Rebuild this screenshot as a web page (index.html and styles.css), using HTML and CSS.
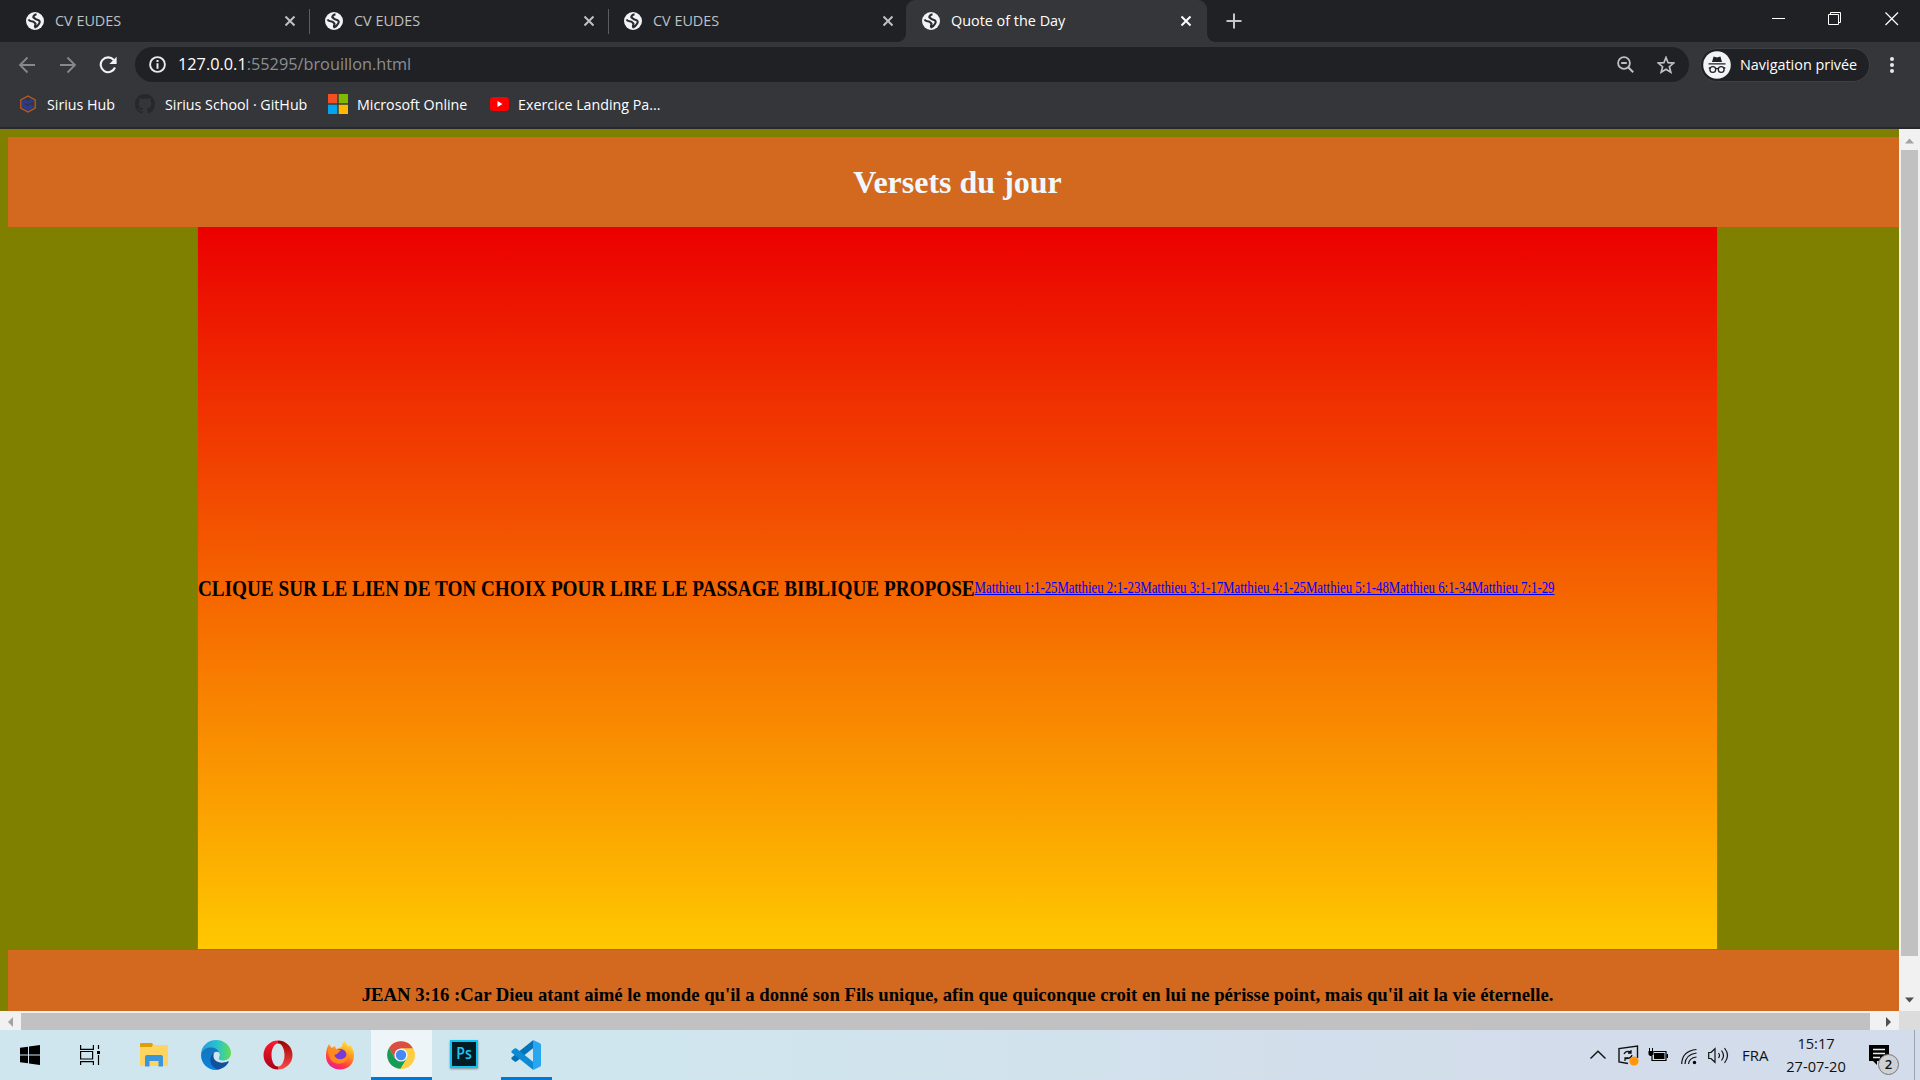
FILE: index.html
```html
<!DOCTYPE html>
<html lang="fr">
<head>
<meta charset="utf-8">
<title>Quote of the Day</title>
<link rel="stylesheet" href="styles.css">
</head>
<body>
<svg class="defs" width="0" height="0">
  <symbol id="globe" viewBox="0 0 18 18"><circle cx="9" cy="9" r="9" fill="#f1f3f4"/><path d="M10.500 2.300Q7.500 3 7.300 5.200 9.500 7.500 12.500 8.200 14.500 9.300 13.200 11.500 11.500 14.500 9.300 15.300 8.600 13.600 9.600 12 8.300 9.400 5.500 9.300 3.500 9 2.500 7.500" fill="none" stroke="#292a2d" stroke-width="2.100" stroke-linejoin="round"/></symbol>
  <symbol id="close" viewBox="0 0 12 12"><path d="M1.500 1.500l9 9m0-9l-9 9" fill="none" stroke="currentColor" stroke-width="2"/></symbol>
</svg>
<div class="screen">
  <div class="tabstrip">
    <div class="tab"><svg class="favicon"><use href="#globe"/></svg><span class="title">CV EUDES</span><svg class="close"><use href="#close"/></svg></div>
    <div class="tab"><svg class="favicon"><use href="#globe"/></svg><span class="title">CV EUDES</span><svg class="close"><use href="#close"/></svg></div>
    <div class="tab last"><svg class="favicon"><use href="#globe"/></svg><span class="title">CV EUDES</span><svg class="close"><use href="#close"/></svg></div>
    <div class="tab active"><svg class="favicon"><use href="#globe"/></svg><span class="title">Quote of the Day</span><svg class="close"><use href="#close"/></svg></div>
    <svg class="plus" width="16" height="16" viewBox="0 0 16 16"><path d="M8 .5v15M.5 8h15" stroke="#c4c7ca" stroke-width="2"/></svg>
    <div class="window-buttons">
      <svg width="14" height="14" viewBox="0 0 14 14"><path d="M0 6.500h13" stroke="#fff"/></svg>
      <svg width="14" height="14" viewBox="0 0 14 14"><path d="M.5 2.500h10v10H.5zM2.500 2.500V.5h10v10h-2" fill="none" stroke="#fff"/></svg>
      <svg width="14" height="14" viewBox="0 0 14 14"><path d="M.5.5l12.500 12.500M13 .5L.5 13" stroke="#fff" stroke-width="1.200"/></svg>
    </div>
  </div>

  <div class="toolbar">
    <svg class="nav" width="18" height="18" viewBox="0 0 18 18"><path d="M17 9H2m7.500-7.500L2 9l7.500 7.500" fill="none" stroke="#86888b" stroke-width="1.800"/></svg>
    <svg class="nav" width="18" height="18" viewBox="0 0 18 18"><path d="M1 9h15M8.500 1.500L16 9l-7.500 7.500" fill="none" stroke="#86888b" stroke-width="1.800"/></svg>
    <svg class="nav" width="18" height="18" viewBox="0 0 18 18"><path d="M14.800 4A7.400 7.400 0 1 0 16 11.500" fill="none" stroke="#f1f3f4" stroke-width="2.100"/><path d="M17.600.8v7.200h-7.200z" fill="#f1f3f4"/></svg>
    <div class="omnibox">
      <svg width="17" height="17" viewBox="0 0 17 17"><circle cx="8.500" cy="8.500" r="7.400" fill="none" stroke="#e8eaed" stroke-width="1.900"/><path d="M8.500 4v2M8.500 7.300v5.500" stroke="#e8eaed" stroke-width="2"/></svg>
      <span class="url"><b>127.0.0.1</b>:55295/brouillon.html</span>
      <svg class="zoom" width="17" height="17" viewBox="0 0 17 17"><circle cx="7" cy="7" r="5.900" fill="none" stroke="#bdc1c6" stroke-width="1.800"/><path d="M4.200 7h5.600M11.200 11.200l5 5" stroke="#bdc1c6" stroke-width="2"/></svg>
      <svg width="18" height="18" viewBox="0 0 18 18"><path d="M9 1.500l2.100 5.200 5.600.4-4.300 3.600 1.400 5.500L9 13.200l-4.800 3 1.400-5.500-4.300-3.600 5.600-.4z" fill="none" stroke="#bdc1c6" stroke-width="1.700"/></svg>
    </div>
    <div class="private">
      <svg width="28" height="28" viewBox="0 0 28 28"><circle cx="14" cy="14" r="13.800" fill="#f1f3f4"/><path d="M9 11l1.600-5.400 3.400.8 3.400-.8L19 11zM5.500 12.300h17v1.200h-17z" fill="#202124"/><g fill="none" stroke="#202124" stroke-width="1.300"><circle cx="9.800" cy="18.500" r="2.900"/><circle cx="18.200" cy="18.500" r="2.900"/><path d="M5.800 17h1.500m5.400.8q1.300-.8 2.600 0M20.800 17h1.500"/></g></svg>
      <span>Navigation privée</span>
    </div>
    <svg class="menu" width="4" height="18" viewBox="0 0 4 18"><g fill="#e8eaed"><circle cx="2" cy="3" r="2"/><circle cx="2" cy="9" r="2"/><circle cx="2" cy="15" r="2"/></g></svg>
  </div>

  <div class="bookmarks">
    <a class="hub"><svg width="18" height="18" viewBox="0 0 18 18"><path d="M9 1l7.200 4v8L9 17l-7.200-4V5z" fill="none" stroke="#bd5b20" stroke-width="1.300"/><path d="M3.300 5.800L6 4.300 9 6.400l3-2.100 2.700 1.500v1L9 9 6 8v2.500L9 11l3-1 2.700 1v1.300L9 15.500l-5.700-3.200z" fill="#2a3b91"/></svg>Sirius Hub</a>
    <a class="github"><svg width="20" height="20" viewBox="0 0 16 16"><path fill="#24292e" d="M8 0C3.580 0 0 3.580 0 8c0 3.540 2.290 6.530 5.470 7.590.4.070.55-.17.55-.38 0-.19-.01-.82-.01-1.490-2.010.37-2.530-.49-2.690-.94-.09-.23-.48-.94-.82-1.130-.28-.15-.68-.52-.01-.53.63-.01 1.080.58 1.230.82.72 1.210 1.870.87 2.330.66.070-.52.28-.87.51-1.070-1.780-.2-3.640-.89-3.640-3.950 0-.87.31-1.590.82-2.150-.08-.2-.36-1.020.08-2.120 0 0 .67-.21 2.200.82.64-.18 1.320-.27 2-.27s1.360.09 2 .27c1.530-1.040 2.200-.82 2.200-.82.44 1.100.16 1.920.08 2.120.51.56.82 1.270.82 2.150 0 3.070-1.870 3.750-3.650 3.950.29.25.54.73.54 1.480 0 1.070-.01 1.930-.01 2.200 0 .21.15.46.55.38A8.010 8.010 0 0 0 16 8c0-4.420-3.580-8-8-8z"/></svg>Sirius School · GitHub</a>
    <a class="ms"><svg width="20" height="20" viewBox="0 0 20 20"><path fill="#f25022" d="M0 0h9.300v9.300H0z"/><path fill="#7fba00" d="M10.700 0H20v9.300h-9.300z"/><path fill="#00a4ef" d="M0 10.700h9.300V20H0z"/><path fill="#ffb900" d="M10.700 10.700H20V20h-9.300z"/></svg>Microsoft Online</a>
    <a class="yt"><svg width="19" height="14" viewBox="0 0 19 14"><rect width="19" height="14" rx="3.500" fill="#f00"/><path d="M7.500 4l5 3-5 3z" fill="#fff"/></svg>Exercice Landing Pa...</a>
  </div>

  <div class="viewport">
    <div class="page">
      <header><h1>Versets du jour</h1></header>
      <main><h2>CLIQUE SUR LE LIEN DE TON CHOIX POUR LIRE LE PASSAGE BIBLIQUE PROPOSE</h2><a href="#">Matthieu 1:1-25</a><a href="#">Matthieu 2:1-23</a><a href="#">Matthieu 3:1-17</a><a href="#">Matthieu 4:1-25</a><a href="#">Matthieu 5:1-48</a><a href="#">Matthieu 6:1-34</a><a href="#">Matthieu 7:1-29</a></main>
      <footer><h3>JEAN 3:16 :Car Dieu atant aimé le monde qu'il a donné son Fils unique, afin que quiconque croit en lui ne périsse point, mais qu'il ait la vie éternelle.</h3></footer>
    </div>
    <div class="vbar">
      <svg width="21" height="21"><path d="M6 14.500h9l-4.500-5z" fill="#a3a3a3"/></svg>
      <div class="thumb"></div>
      <svg width="21" height="21"><path d="M6 7.500h9l-4.500 5z" fill="#505050"/></svg>
    </div>
    <div class="hbar">
      <svg width="21" height="19"><path d="M13 6v10l-5-5z" fill="#a3a3a3"/></svg>
      <div class="thumb"></div>
      <svg width="29" height="19"><path d="M16 6v10l5-5z" fill="#505050"/></svg>
    </div>
    <div class="corner"></div>
  </div>

  <div class="taskbar">
    <div class="cell small"><svg width="20" height="20" viewBox="0 0 20 20"><path d="M0 2.800l8-1.100v7.800H0zM9 1.500L20 0v9.500H9zM0 10.500h8v7.800l-8-1.100zM9 10.500h11V20L9 18.500z"/></svg></div>
    <div class="cell small"><svg width="20" height="20" viewBox="0 0 20 20"><path d="M.6 0v4.400h12.800V0M.6 20v-3.400h12.800V20M.6 6.500h12v7.500H.6zM18.500 0v4M18.500 10v10" fill="none" stroke="#000" stroke-width="1.200"/><path d="M17 6h3v3h-3z"/></svg></div>
    <div class="cell first"><svg width="28" height="24" viewBox="0 0 28 24"><path d="M1 0h11l1.500 2H27q1 0 1 1v19q0 1-1 1H0V1q0-1 1-1z" fill="#ffd461"/><path d="M1 0h11l1 1.500L11.500 4H0V1q0-1 1-1z" fill="#dea006"/><path d="M5 23.500V14q0-2 2-2h14q2 0 2 2v9.500h-4.500V18h-9v5.500z" fill="#3995de"/></svg></div>
    <div class="cell"><svg width="30" height="30" viewBox="0 0 30 30"><defs><linearGradient id="e1"><stop stop-color="#249de0"/><stop offset=".55" stop-color="#2bc2cf"/><stop offset="1" stop-color="#62df4f"/></linearGradient><linearGradient id="e2" x2="0" y2="1"><stop stop-color="#1674b8"/><stop offset="1" stop-color="#0a84e0"/></linearGradient></defs><path d="M0 15C0 6 7 0 15 0c9 0 15 6.500 15 13 0 5-4 7.500-8 7.500-3 0-5-1-4-3 2-3 0-6.500-4-7.500C8 8.500 2 11 0 15z" fill="url(#e1)"/><path d="M0 15c1-5 5-7.500 10-7.500 4 0 7 2 8 5-3-2-6 0-6 4 0 5 3 9.500 7 12.500-1.500.7-3 1-4 1C6 30 0 23 0 15z" fill="url(#e2)"/><path d="M12.500 13c-4 3-4 9-1 13 2.500 3 6 4 9 2.500 3.500-1.500 6-4 7.200-6.500.3-.7-.3-1-.9-.7-6 3-13 1-14.300-4z" fill="#10509c"/></svg></div>
    <div class="cell"><svg width="30" height="30" viewBox="0 0 30 30"><defs><linearGradient id="o1" x2="0" y2="1"><stop stop-color="#ff1b2d"/><stop offset="1" stop-color="#a70014"/></linearGradient><linearGradient id="o2" x2="0" y2="1"><stop stop-color="#9c0000"/><stop offset="1" stop-color="#ff4b4b"/></linearGradient></defs><path d="M15 .5a14.500 14.500 0 0 0 0 29V26.500C10.500 26.500 8.500 20 8.500 15S10.500 3.500 15 3.500z" fill="url(#o1)"/><path d="M15 .5a14.500 14.500 0 0 1 0 29V26.500c4.500 0 6.500-6.500 6.500-11.500S19.500 3.500 15 3.500z" fill="url(#o2)"/></svg></div>
    <div class="cell"><svg width="30" height="30" viewBox="0 0 30 30"><defs><linearGradient id="f1" x1=".8" y1="0" x2=".3" y2="1"><stop stop-color="#fff044"/><stop offset=".4" stop-color="#ff9a1f"/><stop offset=".75" stop-color="#ff3d3d"/><stop offset="1" stop-color="#ed18a0"/></linearGradient></defs><path d="M4 4l2.500 4 3.500-2 1 3 6-2q0-4 3-6.500 1 4 4 6l1-2q4 5 4 11C29 24 23 29.500 15 29.500S1 24 1 16Q1 9 4 4z" fill="url(#f1)"/><circle cx="15.500" cy="15" r="6" fill="#743bd8"/><path d="M3 9q5-2 8 1h5l-4 4-3 1q2 5 8 4 4-1 5-5 2 4-1 7-6 5-13 1Q3 18 3 9z" fill="#ff8a20"/></svg></div>
    <div class="cell current"><svg width="28" height="28" viewBox="0 0 28 28"><circle cx="14" cy="14" r="13.800" fill="#ffcd41"/><path d="M2 7.100A13.800 13.800 0 0 1 26 7.400H14L8 17.500z" fill="#db4f43"/><path d="M2 7.100A13.800 13.800 0 0 0 13.500 27.800L20 17 8 17.500z" fill="#159b5a"/><path d="M14 7.400h12A13.800 13.800 0 0 1 13.500 27.800L20 17.500z" fill="#ffcd41"/><circle cx="14" cy="14" r="6.600" fill="#f1f5f7"/><circle cx="14" cy="14" r="5.200" fill="#4788f4"/></svg></div>
    <div class="cell"><div class="ps"><span>Ps</span></div></div>
    <div class="cell opened"><svg width="30" height="30" viewBox="0 0 30 30"><path d="M22 .2v8L5.500 21.500q-1 .6-2 0L.8 19.200q-1-1 0-2z" fill="#0073ba"/><path d="M22 29.800v-8L5.500 8.500q-1-.6-2 0L.8 10.800q-1 1 0 2z" fill="#0c8bd2"/><path d="M22 0l7 3.300q1 .5 1 1.700v20q0 1.200-1 1.700L22 30z" fill="#28a7f0"/></svg></div>
    <div class="tray">
      <svg width="16" height="10" viewBox="0 0 16 10"><path d="M.5 8.500L8 1.300l7.500 7.200" fill="none" stroke="#111" stroke-width="1.400"/></svg>
      <svg class="sync" width="21" height="21" viewBox="0 0 21 21"><path d="M10 18.500L1 17V3.500L19.500 1v12" fill="none" stroke="#111" stroke-width="1.400"/><path d="M6 9q2-4 7-2m0-2v3h-3M14 10q-1 4-7 3.500m0 2.500v-3h3" fill="none" stroke="#111" stroke-width="1.300"/><circle cx="16" cy="16" r="4.600" fill="#ff960b"/></svg>
      <svg class="battery" width="20" height="14" viewBox="0 0 20 14"><path d="M5.500 3.500H18v9H4V8" fill="none" stroke="#000" stroke-width="1.200"/><path d="M6 5h10.500v6H6zM18.500 6H20v4h-1.500zM.5 3h5v3.500L4 8H2L.5 6.500zM1 0h1v3H1zM4 0h1v3H4z"/></svg>
      <svg class="wifi" width="16" height="17" viewBox="0 0 16 17"><g fill="none" stroke="#111" stroke-width="1.200"><path d="M.7 16Q1 3 15.500 1.500M4 16Q4.500 6.500 15.500 5M7.500 16Q8 10 15.500 9"/></g><circle cx="13.500" cy="14.500" r="1.700"/></svg>
      <svg class="volume" width="21" height="17" viewBox="0 0 21 17"><path d="M.7 5.500H3l4-3.800v13.600l-4-3.800H.7zM10.500 6q2 2.500 0 5M13.500 3.500q4 5 0 10M16.500 1q6 7.500 0 15" fill="none" stroke="#111" stroke-width="1.200"/></svg>
      <span class="lang">FRA</span>
      <div class="clock"><span>15:17</span><span>27-07-20</span></div>
      <div class="notice"><svg width="20" height="20" viewBox="0 0 20 20"><path d="M0 0h20v16H8v4l-4-4H0z"/><path d="M4 4.500h12M4 8.500h12M4 12.500h7" stroke="#e6edf5" stroke-width="1.300"/></svg><span class="badge">2</span></div>
      <div class="peek"></div>
    </div>
  </div>
</div>
</body>
</html>
```
FILE: styles.css
```css
* { box-sizing: border-box; }
body { margin: 0; overflow: hidden; font-family: "Open Sans", "Noto Sans", sans-serif; }
svg { display: block; flex: none; }
.defs { position: absolute; }
.screen { display: flex; flex-direction: column; width: 1920px; height: 1080px; overflow: hidden; }

.tabstrip { display: flex; align-items: center; height: 42px; padding-left: 11px; background: #202124; flex: none; }
.tab { position: relative; display: flex; align-items: center; width: 299px; height: 42px; padding: 0 14px 0 15px; color: #bdc1c6; font-size: 14.4px; }
.tab::after { content: ""; position: absolute; right: 0; top: 9px; width: 1px; height: 25px; background: #5a5c60; }
.tab.last::after, .tab.active::after { display: none; }
.favicon { width: 18px; height: 18px; }
.title { flex: 1; margin-left: 11px; padding-bottom: 2px; white-space: nowrap; }
.close { width: 12px; height: 12px; }
.active { color: #fff; background: #35363a; border-radius: 9px 9px 0 0; width: 301px; margin-left: -2px; padding: 0 15px 0 16px; }
.active::before { content: ""; position: absolute; left: -8px; right: -8px; bottom: 0; height: 8px; background: radial-gradient(circle at 0 0, transparent 7.5px, #35363a 8px) left / 8px 8px no-repeat, radial-gradient(circle at 100% 0, transparent 7.5px, #35363a 8px) right / 8px 8px no-repeat; }
.plus { margin-left: 19px; }
.window-buttons { display: flex; gap: 42px; margin: -4px 21px 0 auto; }
.window-buttons svg:last-child { margin-left: 1px; }

.toolbar { display: flex; align-items: center; height: 45px; padding: 0 26px 0 18px; background: #35363a; flex: none; }
.nav { margin-right: 22px; }
.nav + .nav { margin-left: 1px; margin-right: 21px; }
.nav + .nav + .nav { margin-right: 18px; }
.omnibox { display: flex; align-items: center; width: 1554px; height: 35px; padding: 0 14px; border-radius: 18px; background: #202124; }
.url { flex: 1; margin-left: 12px; color: #8b8e92; font-size: 16.3px; padding-bottom: 1px; }
.url b { font-weight: 400; color: #fff; }
.zoom { margin-right: 23px; }
.private { display: flex; align-items: center; width: 170px; height: 34px; margin-left: 11px; padding-left: 2px; border: 1px solid #3f4043; border-radius: 17px; background: #202124; color: #fff; font-size: 14.4px; white-space: nowrap; }
.private span { margin-left: 9px; }
.menu { margin-left: auto; }

.bookmarks { display: flex; align-items: center; height: 42px; padding: 0 0 6px 19px; background: #35363a; border-bottom: 2px solid #27282b; color: #fff; font-size: 14.25px; flex: none; white-space: nowrap; }
.bookmarks a { display: flex; align-items: center; }
.hub { width: 116px; gap: 10px; }
.github { width: 193px; gap: 10px; }
.ms { width: 162px; gap: 9px; }
.yt { gap: 9px; }

.viewport { display: grid; grid-template: 882px 19px / 1899px 21px; height: 901px; flex: none; }
.page { overflow: hidden; padding: 8px 0 0 8px; background: #808000; font-family: "Liberation Serif", "Times New Roman", serif; font-size: 16px; }
.page header, .page main, .page footer { width: 1899px; }
.page header { display: flex; justify-content: center; align-items: center; height: 90px; background: #d2691e; }
h1, h2, h3 { margin: 0; white-space: nowrap; }
h1 { color: aliceblue; font-size: 32px; }
.page main { display: flex; align-items: center; height: 722px; background: linear-gradient(#eb0000, #ffc800); transform: scaleX(0.8); }
h2 { font-size: 24px; }
.page main a { color: #0000ff; white-space: nowrap; }
.page footer { height: 120px; margin-top: 1px; padding-top: 34px; background: #d2691e; text-align: center; }
h3 { font-size: 18.72px; line-height: 21px; }

.vbar { display: flex; flex-direction: column; background: #f1f1f1; }
.vbar .thumb { width: 17px; height: 806px; margin: 0 2px auto; background: #c1c1c1; }
.hbar { display: flex; background: #f1f1f1; }
.hbar .thumb { flex: 1; margin-top: 2px; background: #c1c1c1; }
.corner { background: #dcdcdc; }

.taskbar { display: flex; height: 50px; background: linear-gradient(90deg, #d0e6ef, #d0e6ef 35%, #d3dcea 80%, #d3dcea); flex: none; }
.cell { display: flex; justify-content: center; align-items: center; width: 62px; height: 50px; }
.cell.small { width: 60px; }
.cell.first { margin-left: 3px; }
.current { width: 61px; background: #edf5f8; border-bottom: 3px solid #0078d7; padding: 2px 1px 0 0; margin-right: 1px; }
.opened { background: linear-gradient(#0078d7, #0078d7) center bottom / 51px 3px no-repeat; }
.ps { width: 28px; height: 28px; margin-top: -2px; border: 2px solid #12c2ef; background: #001d26; color: #22c5f2; font: 600 16px/23px "Open Sans", sans-serif; text-align: center; box-shadow: 0 1px 2px #0006; }
.ps span { display: block; transform: scaleX(0.88); }
.tray { display: flex; align-items: center; margin-left: auto; font-size: 14.6px; color: #111; }
.sync { margin-left: 12px; }
.battery { margin-left: 9px; }
.wifi { margin-left: 13px; margin-top: 2px; }
.volume { margin-left: 11px; }
.lang { width: 26px; margin-left: 13px; margin-right: 1px; font-size: 15px; padding-bottom: 1px; }
.clock { display: flex; flex-direction: column; align-items: center; width: 64px; margin-left: 15px; line-height: 23px; padding-bottom: 1px; }
.notice { position: relative; margin-left: 21px; }
.badge { position: absolute; left: 9px; top: 9px; width: 21px; height: 21px; border: 1px solid #777; border-radius: 50%; background: #cdd0d4; font-size: 13px; font-weight: 600; line-height: 19px; text-align: center; }
.peek { width: 6px; height: 50px; margin-left: 25px; border-left: 1px solid #9ba3ad; }
```
